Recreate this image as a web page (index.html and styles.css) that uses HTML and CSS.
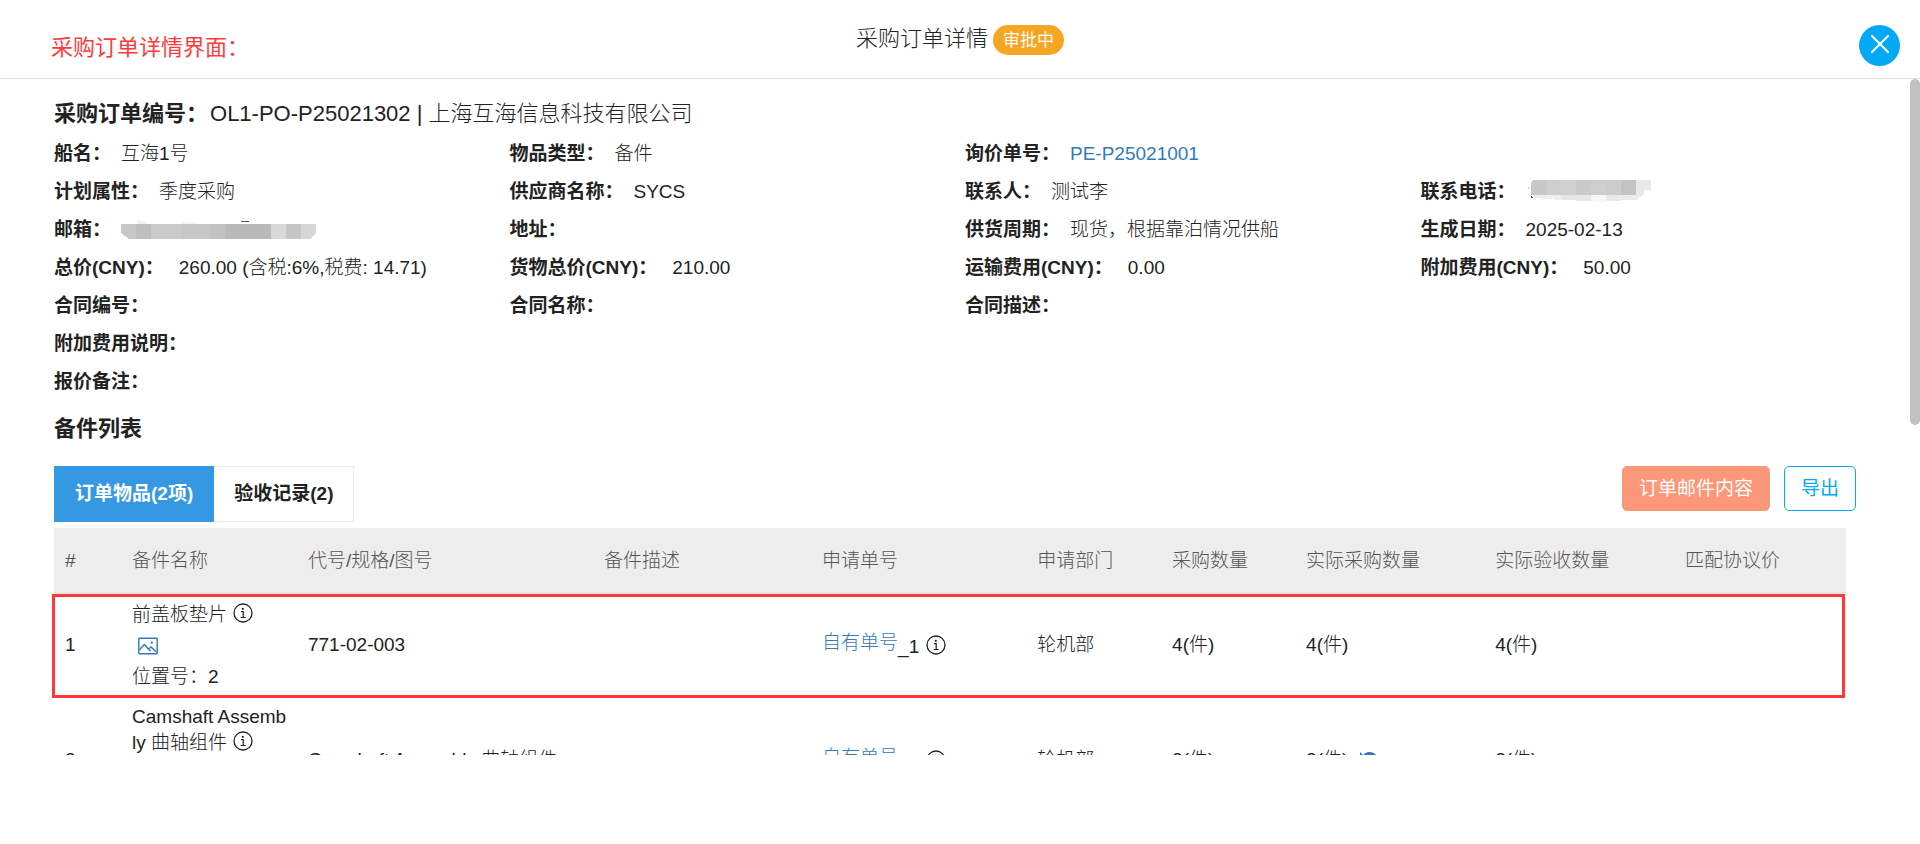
FILE: index.html
```
<!DOCTYPE html>
<html lang="zh-CN">
<head>
<meta charset="utf-8">
<title>采购订单详情</title>
<link rel="stylesheet" href="styles.css">
</head>
<body>
<svg class="defs" aria-hidden="true">
  <symbol id="info" viewBox="0 0 20 20"><circle cx="10" cy="10" r="9" fill="none" stroke="currentColor" stroke-width="1.3"/><circle cx="9.8" cy="5.8" r="1.1" fill="currentColor"/><path d="M8 8.7h2.2v5.6M7.7 14.5h5" fill="none" stroke="currentColor" stroke-width="1.2"/></symbol>
  <symbol id="image" viewBox="0 0 20 18"><rect x=".8" y="1.3" width="18.4" height="15.4" rx=".8" fill="none" stroke="currentColor" stroke-width="1.4"/><path d="M1 13.2l5.3-5.6 6.2 6.6M11 11.8l2-1.8 5.5 5" fill="none" stroke="currentColor" stroke-width="1.4"/><circle cx="13.8" cy="5.6" r="1.2" fill="currentColor"/></symbol>
  <symbol id="undo" viewBox="0 0 18 18"><path d="M3.5 6A7 7 0 1 1 3 12" fill="none" stroke="currentColor" stroke-width="3"/><path d="M0 1v8h8z" fill="currentColor"/></symbol>
</svg>
<div class="page">
  <header class="topbar">
    <p class="note">采购订单详情界面：</p>
    <h1 class="page-title">采购订单详情 <span class="badge">审批中</span></h1>
    <button class="close" type="button" aria-label="关闭"><svg width="18" height="18" viewBox="0 0 18 18"><path d="M1 1l16 16M17 1L1 17" stroke="#fff" stroke-width="2" stroke-linecap="round"/></svg></button>
  </header>
  <main class="content">
    <h2 class="order-no"><span class="label">采购订单编号：</span><span>OL1-PO-P25021302 | 上海互海信息科技有限公司</span></h2>
    <dl class="info">
      <div class="field"><dt>船名：</dt><dd>互海1号</dd></div>
      <div class="field"><dt>物品类型：</dt><dd>备件</dd></div>
      <div class="field half"><dt>询价单号：</dt><dd><a href="#">PE-P25021001</a></dd></div>
      <div class="field"><dt>计划属性：</dt><dd>季度采购</dd></div>
      <div class="field"><dt>供应商名称：</dt><dd>SYCS</dd></div>
      <div class="field"><dt>联系人：</dt><dd>测试李</dd></div>
      <div class="field"><dt>联系电话：</dt><dd class="masked"><svg width="126" height="24" viewBox="0 0 126 24" shape-rendering="crispEdges"><path d="M5 2l3-2h12v15H5z" fill="#c8c8c8"/><path d="M20 0h15v15H20zM65 0h15v15H65z" fill="#cecece"/><path d="M35 0h15v15H35z" fill="#d0d0d0"/><path d="M50 0h15v15H50z" fill="#cacaca"/><path d="M80 0h15v15H80z" fill="#ccc"/><path d="M95 0h15v15H95z" fill="#c3c3c3"/><path d="M110 0h15v10h-7v5h-8z" fill="#e8e8e8"/><path d="M8 15h27v5L8 18z" fill="#eee"/><path d="M35 15h30v6l-30-1z" fill="#e6e6e6"/><path d="M65 15h15v7H65z" fill="#f8f8f8"/><path d="M80 15h37l-7 5-30 1z" fill="#eaeaea"/><path d="M5 16h1v1h1v1H5z" fill="#444"/><path d="M2 7h1v2H2z" fill="#ccc"/></svg></dd></div>
      <div class="field"><dt>邮箱：</dt><dd class="masked"><svg width="196" height="20" viewBox="0 0 196 20" shape-rendering="crispEdges"><path d="M0 4h15v15H8l-8-6z" fill="#c8c8c8"/><path d="M15 4h15v15H15z" fill="#bebebe"/><path d="M30 4h30v15H30z" fill="#cbcbcb"/><path d="M60 4h30v15H60z" fill="#c7c7c7"/><path d="M90 4h15v15H90z" fill="#c2c2c2"/><path d="M105 4h45v15h-45z" fill="#b9b9b9"/><path d="M150 4h15v15h-15z" fill="#d9d9d9"/><path d="M165 4h15v15h-15z" fill="#c5c5c5"/><path d="M180 4h15v9l-6 6h-9z" fill="#d6d6d6"/><path d="M16 0l10 2v2H16zM60 2h15v2H60z" fill="#f3f3f3"/><path d="M118 2l3-1h5l3 1z" fill="#555"/></svg></dd></div>
      <div class="field"><dt>地址：</dt><dd></dd></div>
      <div class="field"><dt>供货周期：</dt><dd>现货，根据靠泊情况供船</dd></div>
      <div class="field"><dt>生成日期：</dt><dd>2025-02-13</dd></div>
      <div class="field money"><dt>总价(CNY)：</dt><dd>260.00 (含税:6%,税费: 14.71)</dd></div>
      <div class="field money"><dt>货物总价(CNY)：</dt><dd>210.00</dd></div>
      <div class="field money"><dt>运输费用(CNY)：</dt><dd>0.00</dd></div>
      <div class="field money"><dt>附加费用(CNY)：</dt><dd>50.00</dd></div>
      <div class="field"><dt>合同编号：</dt><dd></dd></div>
      <div class="field"><dt>合同名称：</dt><dd></dd></div>
      <div class="field half"><dt>合同描述：</dt><dd></dd></div>
      <div class="field full"><dt>附加费用说明：</dt><dd></dd></div>
      <div class="field full"><dt>报价备注：</dt><dd></dd></div>
    </dl>
    <h2 class="section-title">备件列表</h2>
    <div class="toolbar">
      <div class="tabs" role="tablist">
        <button class="tab active" type="button" role="tab" aria-selected="true">订单物品(2项)</button>
        <button class="tab" type="button" role="tab" aria-selected="false">验收记录(2)</button>
      </div>
      <div class="actions">
        <button class="btn btn-mail" type="button">订单邮件内容</button>
        <button class="btn btn-export" type="button">导出</button>
      </div>
    </div>
    <table class="items">
      <colgroup><col class="c-no"><col class="c-name"><col class="c-code"><col class="c-desc"><col class="c-apply"><col class="c-dept"><col class="c-qty"><col class="c-real"><col class="c-check"><col class="c-price"></colgroup>
      <thead>
        <tr><th>#</th><th>备件名称</th><th>代号/规格/图号</th><th>备件描述</th><th>申请单号</th><th>申请部门</th><th>采购数量</th><th>实际采购数量</th><th>实际验收数量</th><th>匹配协议价</th></tr>
      </thead>
      <tbody>
        <tr class="marked">
          <td>1</td>
          <td class="name">前盖板垫片 <svg class="ico"><use href="#info"/></svg><a class="pic" href="#" aria-label="图片"><svg class="ico-pic"><use href="#image"/></svg></a>位置号：2</td>
          <td>771-02-003</td><td></td>
          <td><a class="apply" href="#">自有单号</a>_1 <svg class="ico"><use href="#info"/></svg></td>
          <td>轮机部</td><td>4(件)</td><td>4(件)</td><td>4(件)</td><td></td>
        </tr>
        <tr>
          <td>2</td>
          <td class="name">Camshaft Assembly 曲轴组件 <svg class="ico"><use href="#info"/></svg><a class="pic" href="#" aria-label="图片"><svg class="ico-pic"><use href="#image"/></svg></a>位置号：3</td>
          <td>Camshaft Assembly 曲轴组件</td><td></td>
          <td><a class="apply" href="#">自有单号</a>_2 <svg class="ico"><use href="#info"/></svg></td>
          <td>轮机部</td><td>2(件)</td><td>2(件) <a class="undo" href="#" aria-label="撤回"><svg class="ico-undo"><use href="#undo"/></svg></a></td><td>2(件)</td><td></td>
        </tr>
      </tbody>
    </table>
    <div class="scroll-thumb"></div>
  </main>
</div>
</body>
</html>
```
FILE: styles.css
```
* { box-sizing: border-box; }
body {
  margin: 0;
  background: #fff;
  color: #222;
  font: 300 19px/26px "Liberation Sans", "Noto Sans CJK SC", sans-serif;
}
a { color: #337ab7; text-decoration: none; }
button { font: inherit; cursor: pointer; }
h1, h2, p, dl, dd { margin: 0; }
.defs { display: none; }

.page {
  display: flex;
  flex-direction: column;
  height: 100vh;
  padding-bottom: 89px;
}

.topbar {
  display: grid;
  grid-template-columns: 1fr auto 1fr;
  flex: none;
  height: 79px;
  padding: 0 20px 0 51px;
  border-bottom: 1px solid #e0e0e0;
}
.note {
  padding-top: 33px;
  color: #ff3b3b;
  font-size: 22px;
  line-height: 30px;
  font-weight: 400;
}
.page-title {
  display: flex;
  gap: 5px;
  padding-top: 25px;
  margin-left: -31px;
  font-size: 22px;
  line-height: 28px;
  font-weight: 300;
}
.badge {
  height: 30px;
  padding: 1px 10px 0;
  border-radius: 15px;
  background: #f5a623;
  color: #fff;
  font-size: 17px;
  line-height: 30px;
  font-weight: 400;
}
.close {
  display: flex;
  align-items: center;
  justify-content: center;
  justify-self: end;
  width: 41px;
  height: 41px;
  margin-top: 25px;
  padding: 0 0 3px;
  border: 0;
  border-radius: 50%;
  background: #03a9f4;
}

.content {
  position: relative;
  flex: 1;
  min-height: 0;
  overflow: hidden;
  padding: 13px 44px 0 54px;
}
.order-no {
  display: flex;
  gap: 2px;
  font-size: 22px;
  line-height: 43px;
  font-weight: 300;
}
.order-no .label { font-weight: 700; }

.info {
  display: grid;
  grid-template-columns: repeat(4, 1fr);
  grid-auto-rows: 38px;
  line-height: 38px;
}
.field { display: flex; gap: 10px; white-space: nowrap; }
.field.half { grid-column: span 2; }
.field.full { grid-column: 1 / -1; }
.field.money { gap: 15px; }
.field dt { font-weight: 700; }
.masked { display: flex; align-items: center; }

.section-title {
  margin-bottom: 9px;
  font-size: 22px;
  line-height: 56px;
  font-weight: 700;
}

.toolbar {
  display: flex;
  justify-content: space-between;
  align-items: flex-start;
  margin-bottom: 6px;
  padding-right: 20px;
}
.tabs { display: flex; }
.tab {
  height: 56px;
  padding: 0 20px;
  border: 1px solid #ebebeb;
  border-left: 0;
  background: #fff;
  color: #222;
  font-weight: 700;
}
.tab.active {
  padding: 0 21px;
  border: 0;
  background: #3498e3;
  color: #fff;
}
.actions { display: flex; gap: 14px; }
.btn {
  height: 45px;
  padding: 0 16px;
  border: 1px solid #03a9f4;
  border-radius: 5px;
  background: #fff;
  color: #03a9f4;
  font-weight: 400;
}
.btn-mail { border-color: #fc9779; background: #fc9779; color: #fff; }

.items {
  width: calc(100% - 30px);
  border-collapse: separate;
  border-spacing: 0;
  table-layout: fixed;
}
.c-no { width: 3.74%; }
.c-name { width: 9.82%; }
.c-code { width: 16.52%; }
.c-desc { width: 12.17%; }
.c-apply { width: 12%; }
.c-dept { width: 7.53%; }
.c-qty { width: 7.48%; }
.c-real { width: 10.55%; }
.c-check { width: 10.6%; }
.c-price { width: 9.59%; }
.items th {
  height: 66px;
  padding: 2px 11px 0;
  border-bottom: 2px solid #e6e6e6;
  background: #ededed;
  color: #555;
  font-weight: 300;
  text-align: left;
}
.items td {
  padding: 7px 11px;
  vertical-align: middle;
  word-break: break-all;
}
.items .name { padding: 8px 8px 6px 11px; }
.ico { width: 20px; height: 20px; margin-left: 1px; vertical-align: -2px; }
.ico-pic { display: block; width: 20px; height: 18px; }
.pic { display: flex; align-items: center; height: 36px; padding-left: 6px; }
.apply { vertical-align: 4px; }
.undo { margin-left: 6px; }
.ico-undo { width: 18px; height: 18px; vertical-align: -3px; }

.marked { position: relative; }
.marked::after {
  content: "";
  position: absolute;
  inset: 0 1px -2px -2px;
  border: 3px solid #ff3838;
  pointer-events: none;
}

.scroll-thumb {
  position: absolute;
  top: 0;
  right: 0;
  width: 10px;
  height: 346px;
  border-radius: 5px;
  background: #c1c1c1;
}
```
